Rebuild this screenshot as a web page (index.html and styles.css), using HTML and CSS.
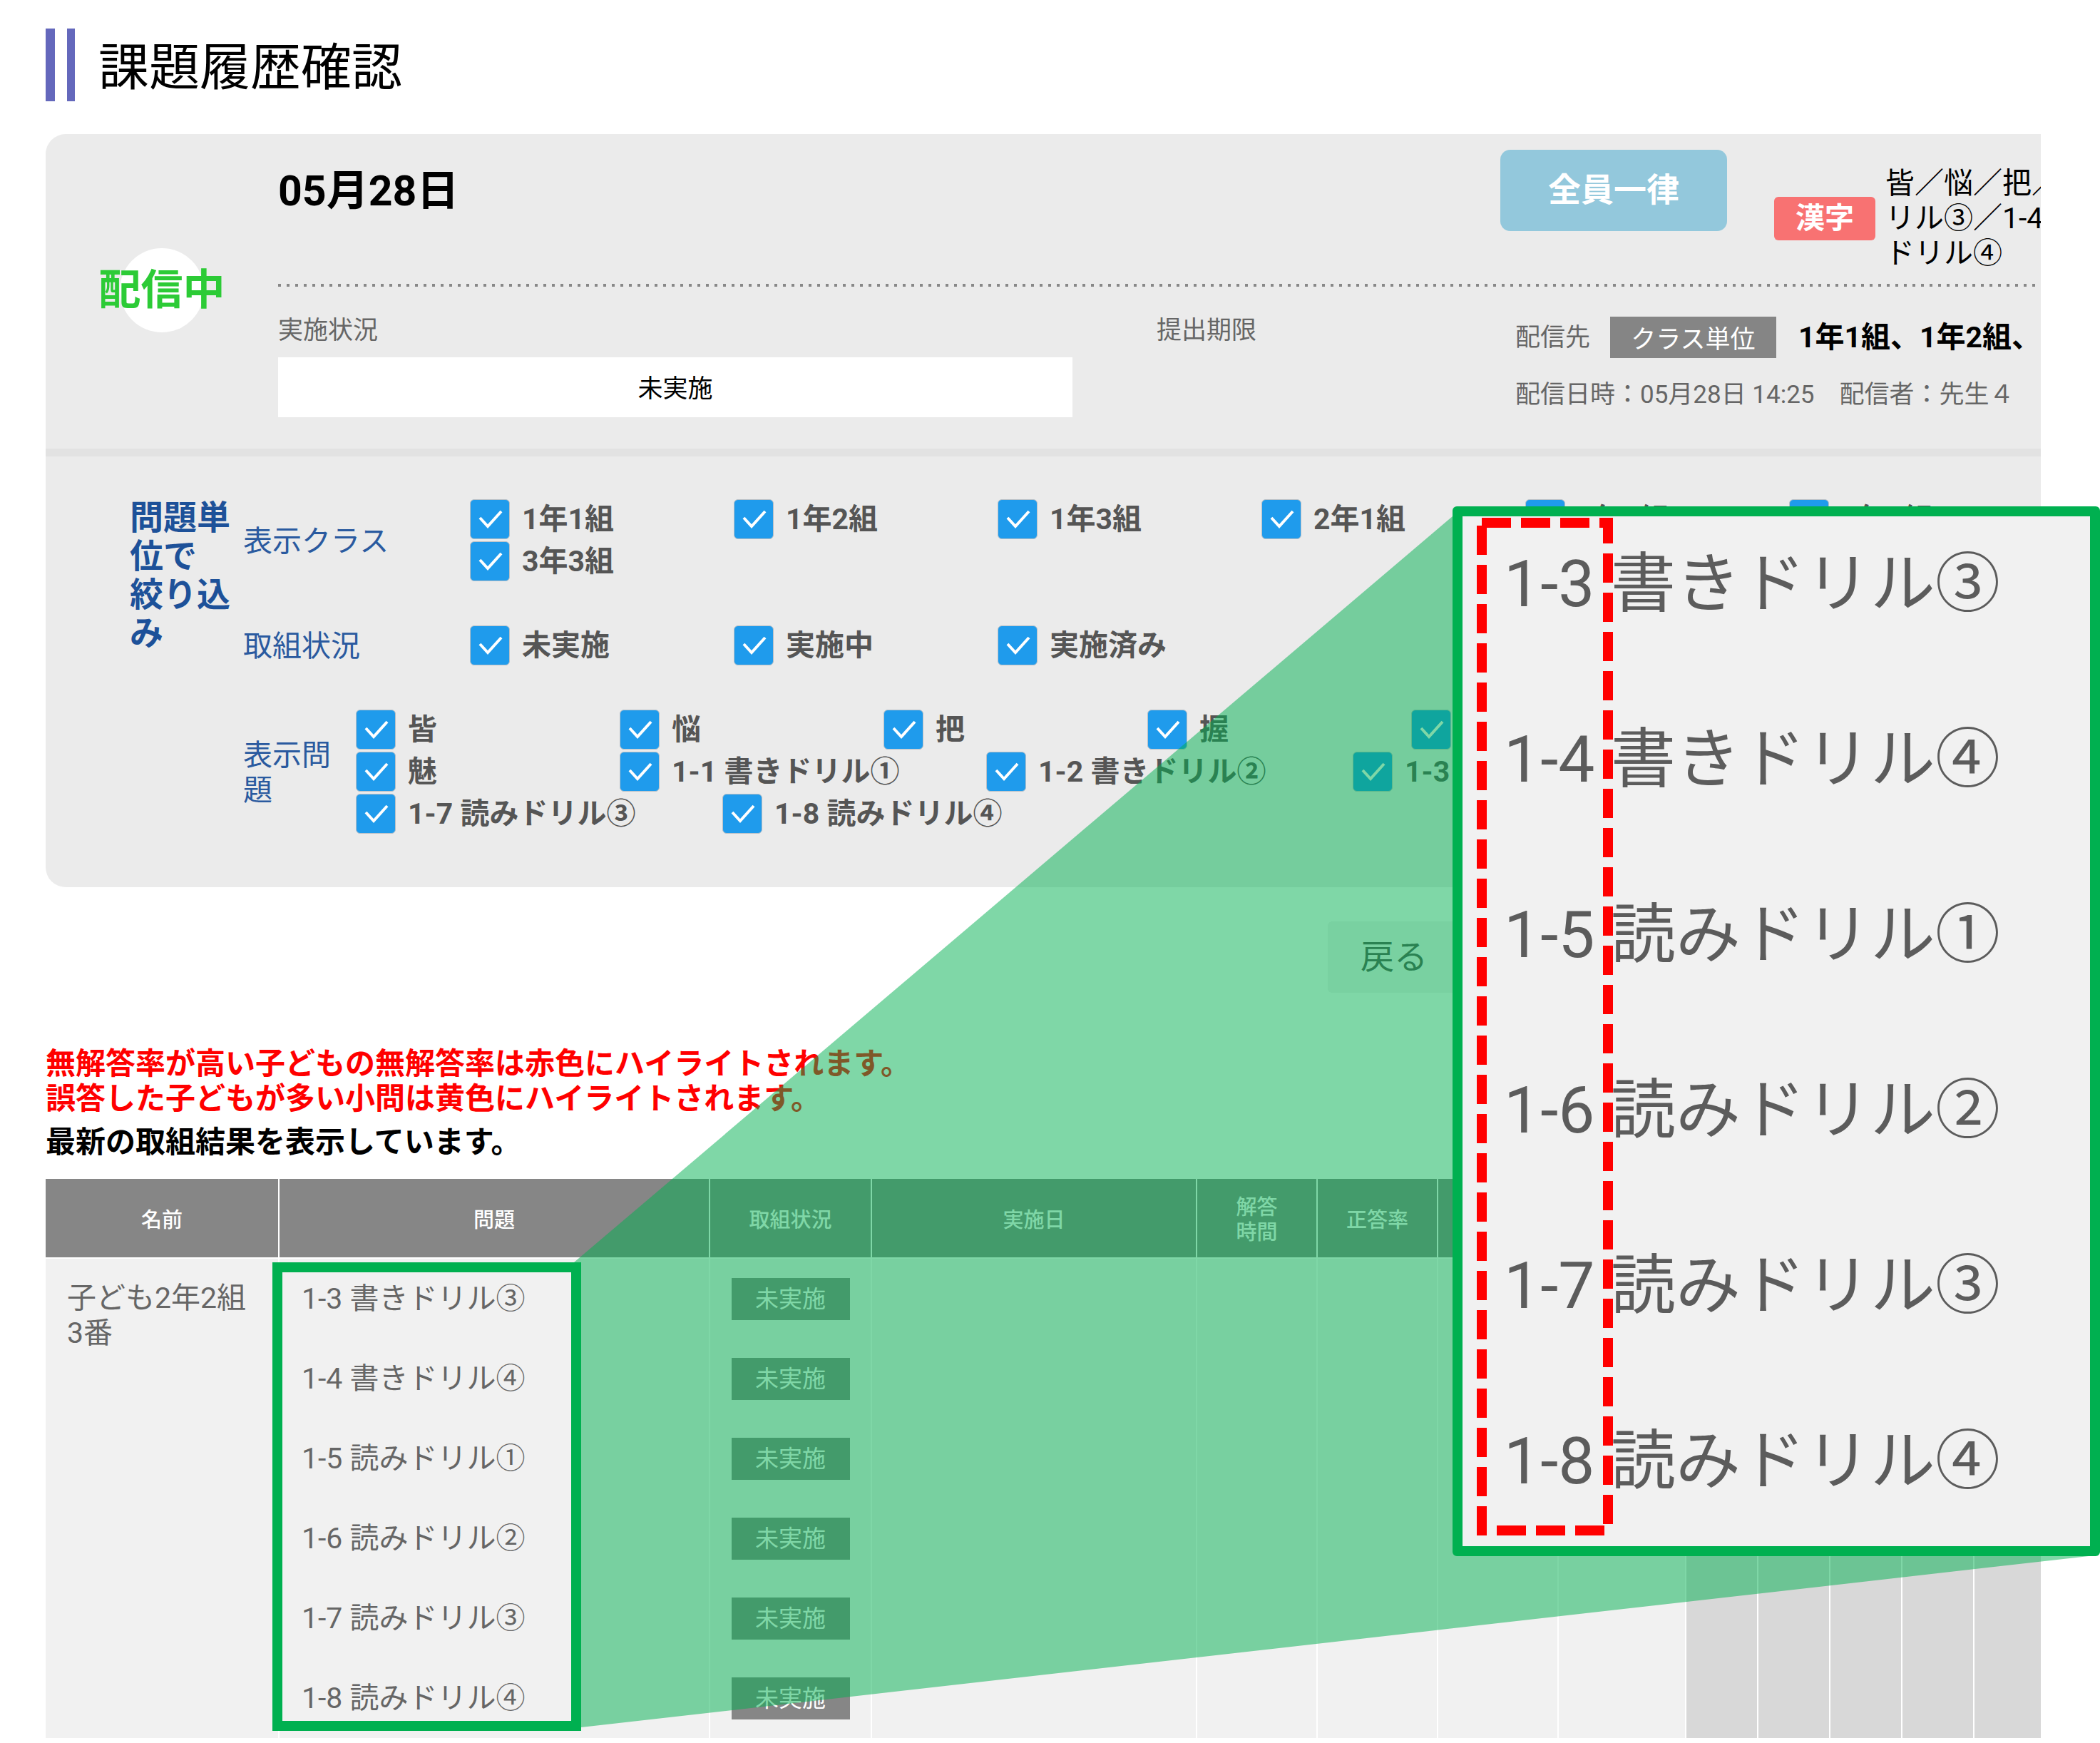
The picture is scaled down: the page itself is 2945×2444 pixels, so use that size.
FILE: index.html
```html
<!DOCTYPE html>
<html lang="ja">
<head>
<meta charset="utf-8">
<title>課題履歴確認</title>
<link rel="stylesheet" href="styles.css">
</head>
<body>
<main class="page">
  <h1 class="title">課題履歴確認</h1>

  <section class="card">
    <div class="summary">
      <div class="status"><span class="status-text">配信中</span></div>
      <div class="summary-main">
        <div class="summary-top">
          <h2 class="date">05月28日</h2>
          <div class="summary-side">
            <button type="button" class="mode">全員一律</button>
            <span class="subject">漢字</span>
            <p class="topics">皆／悩／把／握<br>リル③／1-4 書き<br>ドリル④</p>
          </div>
        </div>
        <div class="summary-bottom">
          <div class="progress">
            <div class="caption">実施状況</div>
            <div class="progress-bar">未実施</div>
          </div>
          <div class="caption">提出期限</div>
          <div class="delivery">
            <div class="delivery-row">配信先<span class="unit">クラス単位</span><strong class="classes">1年1組、1年2組、</strong></div>
            <div class="delivery-date">配信日時：05月28日 14:25　配信者：先生４</div>
          </div>
        </div>
      </div>
    </div>

    <form class="filter">
      <h2 class="filter-title">問題単位で<br>絞り込み</h2>
      <div class="groups">
        <div class="group">
          <div class="group-label">表示クラス</div>
          <div class="checks">
            <div class="check-row">
              <label class="check"><input type="checkbox" checked>1年1組</label>
              <label class="check"><input type="checkbox" checked>1年2組</label>
              <label class="check"><input type="checkbox" checked>1年3組</label>
              <label class="check"><input type="checkbox" checked>2年1組</label>
              <label class="check"><input type="checkbox" checked>2年2組</label>
              <label class="check"><input type="checkbox" checked>2年3組</label>
            </div>
            <div class="check-row">
              <label class="check"><input type="checkbox" checked>3年3組</label>
            </div>
          </div>
        </div>
        <div class="group">
          <div class="group-label">取組状況</div>
          <div class="checks">
            <div class="check-row">
              <label class="check"><input type="checkbox" checked>未実施</label>
              <label class="check"><input type="checkbox" checked>実施中</label>
              <label class="check"><input type="checkbox" checked>実施済み</label>
            </div>
          </div>
        </div>
        <div class="group">
          <div class="group-label group-label-narrow">表示問題</div>
          <div class="checks">
            <div class="check-row">
              <label class="check"><input type="checkbox" checked>皆</label>
              <label class="check"><input type="checkbox" checked>悩</label>
              <label class="check"><input type="checkbox" checked>把</label>
              <label class="check"><input type="checkbox" checked>握</label>
              <label class="check"><input type="checkbox" checked>惑</label>
            </div>
            <div class="check-row">
              <label class="check"><input type="checkbox" checked>魅</label>
              <label class="check check-wide"><input type="checkbox" checked>1-1 書きドリル①</label>
              <label class="check check-wide"><input type="checkbox" checked>1-2 書きドリル②</label>
              <label class="check check-wide"><input type="checkbox" checked>1-3 書きドリル③</label>
            </div>
            <div class="check-row">
              <label class="check check-wide"><input type="checkbox" checked>1-7 読みドリル③</label>
              <label class="check check-wide"><input type="checkbox" checked>1-8 読みドリル④</label>
            </div>
          </div>
        </div>
      </div>
    </form>
  </section>

  <div class="actions"><button type="button" class="back">戻る</button></div>

  <p class="notice notice-alert">無解答率が高い子どもの無解答率は赤色にハイライトされます。<br>誤答した子どもが多い小問は黄色にハイライトされます。</p>
  <p class="notice notice-latest">最新の取組結果を表示しています。</p>

  <table class="results">
    <colgroup>
      <col class="col-name"><col><col class="col-state"><col class="col-date">
      <col class="col-rate"><col class="col-rate"><col class="col-rate"><col class="col-total">
      <col class="col-item"><col class="col-item"><col class="col-item"><col class="col-item"><col class="col-last">
    </colgroup>
    <thead>
      <tr>
        <th>名前</th><th>問題</th><th>取組状況</th><th>実施日</th><th>解答<br>時間</th><th>正答率</th>
        <th></th><th></th><th></th><th></th><th></th><th></th><th></th>
      </tr>
    </thead>
    <tbody>
      <tr>
        <td class="name" rowspan="6">子ども2年2組3番</td>
        <td class="question">1-3 書きドリル③</td>
        <td class="state"><span class="badge">未実施</span></td>
        <td rowspan="6"></td><td rowspan="6"></td><td rowspan="6"></td><td rowspan="6"></td><td rowspan="6"></td>
        <td class="off" rowspan="6"></td><td class="off" rowspan="6"></td><td class="off" rowspan="6"></td><td class="off" rowspan="6"></td><td class="off" rowspan="6"></td>
      </tr>
      <tr><td class="question">1-4 書きドリル④</td><td class="state"><span class="badge">未実施</span></td></tr>
      <tr><td class="question">1-5 読みドリル①</td><td class="state"><span class="badge">未実施</span></td></tr>
      <tr><td class="question">1-6 読みドリル②</td><td class="state"><span class="badge">未実施</span></td></tr>
      <tr><td class="question">1-7 読みドリル③</td><td class="state"><span class="badge">未実施</span></td></tr>
      <tr><td class="question">1-8 読みドリル④</td><td class="state"><span class="badge">未実施</span></td></tr>
    </tbody>
  </table>
</main>

<!-- Zoom annotation laid over the page -->
<svg class="beam" aria-hidden="true"><polygon points="805,1770 2037,724 2100,724 2100,2176 2938,2181 815,2422 815,1770"/></svg>
<div class="source-frame"></div>
<aside class="callout">
  <ul class="callout-list">
    <li>1-3 書きドリル③</li>
    <li>1-4 書きドリル④</li>
    <li>1-5 読みドリル①</li>
    <li>1-6 読みドリル②</li>
    <li>1-7 読みドリル③</li>
    <li>1-8 読みドリル④</li>
  </ul>
  <svg class="dashes" viewBox="0 0 191 1427" aria-hidden="true"><rect x="7" y="7" width="177" height="1413"/></svg>
</aside>
</body>
</html>
```
FILE: styles.css
```css
* { box-sizing: border-box; }

body {
  margin: 0;
  position: relative;
  overflow-x: hidden;
  background: #fff;
  color: #000;
  font-family: Roboto, "Noto Sans CJK JP", sans-serif;
  font-size: 41px;
  line-height: 49px;
}

h1, h2, p, ul { margin: 0; padding: 0; }
button { border: 0; font-family: inherit; }

.page { padding: 40px 83px 4px 64px; }

.title {
  height: 102px;
  padding-left: 74px;
  background:
    linear-gradient(#6468bc, #6468bc) 0 0 / 13px 100% no-repeat,
    linear-gradient(#6468bc, #6468bc) 30px 0 / 11px 100% no-repeat;
  font-size: 71px;
  font-weight: 400;
  line-height: 110px;
}

.card {
  margin-top: 46px;
  overflow: hidden;
  border-radius: 28px 0 0 28px;
  background: #ebebeb;
}

/* Assignment summary */
.summary { display: flex; border-bottom: 11px solid #e2e2e2; }
.status { flex: 0 0 326px; display: flex; align-items: center; justify-content: center; padding-bottom: 4px; }
.status-text {
  display: flex;
  align-items: center;
  justify-content: center;
  width: 118px;
  height: 118px;
  border-radius: 50%;
  background: #fff;
  color: #2ccb36;
  font-size: 59px;
  font-weight: 700;
  white-space: nowrap;
}
.summary-main { flex: 1; min-width: 0; }
.summary-top {
  display: flex;
  height: 214px;
  background: repeating-linear-gradient(90deg, #888 0 4px, transparent 4px 12px) 0 100% / 100% 4px no-repeat;
}
.date { flex: 1; margin-top: 23px; font-size: 59px; line-height: 114px; }
.summary-side { flex: 0 0 758px; display: flex; align-items: flex-start; overflow: hidden; }
.mode {
  flex: none;
  width: 318px;
  height: 114px;
  margin: 22px 66px 0 0;
  padding: 0 0 10px;
  border-radius: 14px;
  background: #93c8dc;
  color: #fff;
  font-size: 46px;
  font-weight: 700;
}
.subject {
  flex: none;
  width: 142px;
  margin: 88px 14px 0 0;
  border-radius: 6px;
  background: #f87272;
  color: #fff;
  font-weight: 700;
  line-height: 61px;
  text-align: center;
}
.topics { margin-top: 45px; white-space: nowrap; }

.summary-bottom {
  display: grid;
  grid-template-columns: minmax(0, 1fr) 503px 737px;
  height: 227px;
  padding-top: 37px;
  color: #666;
  font-size: 35px;
}
.progress { padding-right: 118px; }
.progress-bar {
  height: 84px;
  margin-top: 13px;
  background: #fff;
  color: #000;
  line-height: 90px;
  text-align: center;
}
.delivery { overflow: hidden; white-space: nowrap; }
.delivery-row { display: flex; align-items: center; height: 58px; margin-top: 5px; }
.unit {
  width: 237px;
  margin: 0 31px 0 28px;
  padding-top: 8px;
  background: #858585;
  color: #fff;
  line-height: 50px;
  text-align: center;
}
.classes { color: #000; font-size: 41px; }
.delivery-date { margin-top: 27px; }

/* Filters */
.filter { display: flex; padding: 60px 0 75px 118px; color: #2a5a9f; }
.filter-title { flex: none; width: 159px; padding-right: 16px; margin-top: -1px; color: #1d5199; font-size: 47px; line-height: 54px; }
.groups { flex: 1; min-width: 0; display: flex; flex-direction: column; gap: 62px; }
.group { display: flex; align-items: center; }
.group-label { flex: none; width: 318px; padding-top: 3px; }
.group-label-narrow { width: 158px; padding-right: 34px; }
.checks { display: flex; flex-direction: column; gap: 3px; min-width: 0; }
.check-row { display: flex; }
.check {
  flex: none;
  display: flex;
  align-items: center;
  gap: 17px;
  width: 370px;
  height: 56px;
  color: #555;
  font-weight: 700;
  white-space: nowrap;
}
.check-wide { width: 514px; }
.check input {
  appearance: none;
  flex: none;
  width: 56px;
  height: 56px;
  margin: 0;
  border: 1px solid #b9c0c6;
  border-radius: 6px;
  background: #1f9bec url("data:image/svg+xml,%3Csvg xmlns='http://www.w3.org/2000/svg' viewBox='0 0 54 54'%3E%3Cpath d='M13 25l11 12L43 16' fill='none' stroke='white' stroke-width='4'/%3E%3C/svg%3E") center / 54px 54px no-repeat;
}

.actions { display: flex; justify-content: flex-end; margin-top: 48px; padding-right: 814px; }
.back {
  width: 186px;
  height: 100px;
  padding: 0 0 10px;
  border-radius: 6px;
  background: #f2f2f2;
  color: #555;
  font-size: 47px;
}

.notice { font-size: 42px; font-weight: 700; }
.notice-alert { margin-top: 75px; color: #f00; }
.notice-latest { margin-top: 12px; }

/* Results */
.results {
  width: 100%;
  margin-top: 27px;
  table-layout: fixed;
  border-spacing: 0;
  color: #666;
}
.col-name { width: 328px; }
.col-state { width: 227px; }
.col-date { width: 456px; }
.col-rate { width: 169px; }
.col-total { width: 179px; }
.col-item { width: 101px; }
.col-last { width: 93px; }
.results th {
  height: 112px;
  padding: 6px 0 0;
  border-right: 2px solid #fff;
  border-bottom: 2px solid #fff;
  background: #868686;
  color: #fff;
  font-size: 29px;
  font-weight: 500;
  line-height: 35px;
}
.results td { height: 112px; padding: 0; border-right: 2px solid #fff; background: #f1f1f1; }
.results th:last-child, .results td.off:last-child { border-right: 0; }
.results .name { padding: 31px 30px; vertical-align: top; }
.results .question { padding-left: 31px; }
.results .state { text-align: center; }
.results .off { background: #d8d8d8; }
.badge {
  display: block;
  width: 166px;
  margin: 0 auto;
  background: #868686;
  color: #fff;
  font-size: 33px;
  line-height: 59px;
}

/* Zoom annotation */
.beam { position: absolute; top: 0; left: 0; width: 100%; height: 100%; fill: #00b050; fill-opacity: 0.5; }
.source-frame {
  position: absolute;
  top: 1770px;
  left: 382px;
  width: 433px;
  height: 657px;
  border: 14px solid #00b050;
}
.callout {
  position: absolute;
  top: 710px;
  left: 2037px;
  width: 908px;
  height: 1472px;
  padding-left: 58px;
  border: 14px solid #00b050;
  border-radius: 6px;
  background: #f1f1f1;
  color: #5c5c5c;
  font-size: 91px;
}
.callout-list { margin-top: -28px; list-style: none; line-height: 246px; white-space: nowrap; }
.dashes {
  position: absolute;
  top: 2px;
  left: 20px;
  width: 191px;
  height: 1427px;
  fill: none;
  stroke: #f00;
  stroke-width: 14px;
  stroke-dasharray: 41 14;
}
```
